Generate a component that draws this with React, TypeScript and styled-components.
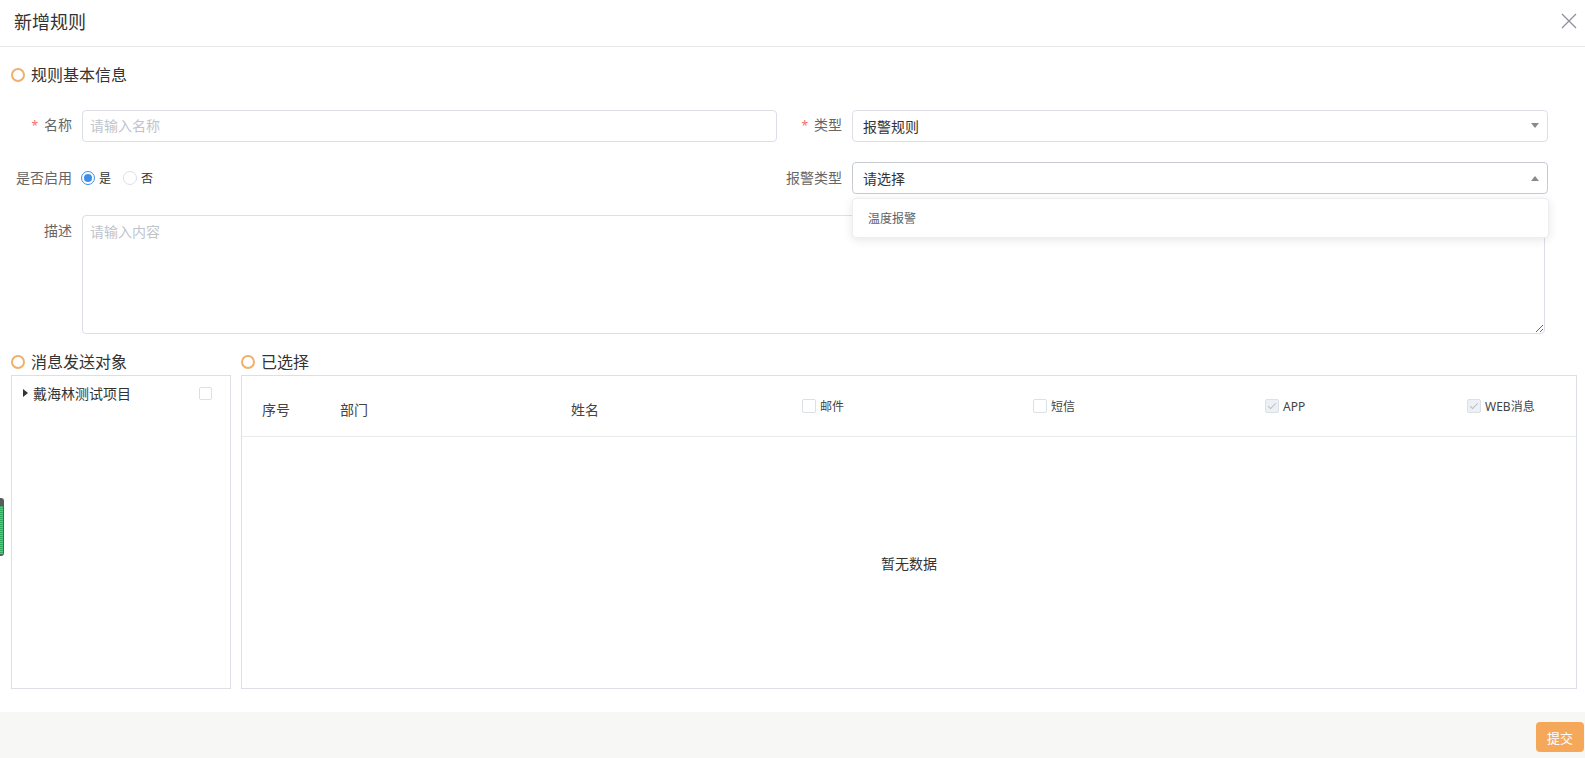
import React from "react";
import styled, { createGlobalStyle, css } from "styled-components";

const GlobalStyle = createGlobalStyle`
  html, body { margin: 0; padding: 0; background: #fff; overflow: hidden; }
  body { font-family: "Noto Sans", "Noto Sans CJK SC", sans-serif; color: #333; }
  * { box-sizing: border-box; }
`;

const Page = styled.div`
  position: relative;
  width: 1585px;
  height: 758px;
  display: flex;
  flex-direction: column;
  background: #fff;
`;

const Header = styled.div`
  height: 47px;
  flex: none;
  display: flex;
  justify-content: space-between;
  align-items: flex-start;
  border-bottom: 1px solid #e6e6e6;
  padding: 0 8px 0 14px;
`;

const Title = styled.div`
  font-size: 18px;
  line-height: 44px;
  color: #333;
`;

const CloseBtn = styled.button`
  margin-top: 13px;
  width: 16px;
  height: 16px;
  padding: 0;
  border: none;
  background: none;
  display: flex;
  cursor: pointer;
`;

const Main = styled.div`
  flex: 1;
  display: flex;
  flex-direction: column;
  padding-top: 17px;
`;

const SectionTitle = styled.div<{ $indent?: number }>`
  display: flex;
  align-items: center;
  gap: 6px;
  height: 22px;
  padding-left: ${(p) => p.$indent ?? 0}px;
  font-size: 16px;
  line-height: 22px;
  color: #333;
  &::before {
    content: "";
    width: 10px;
    height: 10px;
    border-radius: 50%;
    border: 2px solid #f0b06c;
    flex: none;
  }
`;

const FormRow = styled.div<{ $top: number; $right: number }>`
  display: flex;
  margin-top: ${(p) => p.$top}px;
  padding-right: ${(p) => p.$right}px;
`;

const FormItem = styled.div<{ $width?: number; $top?: boolean }>`
  display: flex;
  align-items: ${(p) => (p.$top ? "flex-start" : "center")};
  ${(p) =>
    p.$width
      ? css`
          width: ${p.$width}px;
          flex: none;
        `
      : css`
          flex: 1;
        `}
  min-width: 0;
`;

const Label = styled.label<{ $width: number }>`
  width: ${(p) => p.$width}px;
  flex: none;
  padding-right: 10px;
  text-align: right;
  font-size: 14px;
  line-height: 32px;
  color: #666;
  white-space: nowrap;
`;

const Star = styled.span`
  color: #f56c6c;
  font-size: 12px;
  margin-right: 6px;
`;

const TextInput = styled.input`
  flex: 1;
  height: 32px;
  border: 1px solid #dcdfe6;
  border-radius: 4px;
  padding: 0 7px;
  font-family: inherit;
  font-size: 14px;
  color: #333;
  outline: none;
  &::placeholder { color: #c0c4cc; }
`;

const SelectBox = styled.div<{ $open?: boolean }>`
  position: relative;
  flex: 1;
  height: 32px;
  border: 1px solid ${(p) => (p.$open ? "#c8cbd1" : "#dcdfe6")};
  border-radius: 4px;
  padding: 0 8px 0 10px;
  display: flex;
  align-items: center;
  justify-content: space-between;
  font-size: 14px;
  color: #333;
`;

const Arrow = styled.span<{ $up?: boolean }>`
  width: 0;
  height: 0;
  border-left: 4px solid transparent;
  border-right: 4px solid transparent;
  ${(p) =>
    p.$up
      ? css`border-bottom: 5px solid #8a8a8a;`
      : css`border-top: 5px solid #8a8a8a;`}
`;

const Dropdown = styled.div`
  position: absolute;
  z-index: 10;
  top: calc(100% + 5px);
  left: -1px;
  right: -2px;
  height: 40px;
  background: #fff;
  border: 1px solid #eceef2;
  border-radius: 4px;
  box-shadow: 0 2px 10px rgba(0, 0, 0, 0.1);
  display: flex;
  align-items: center;
  padding-left: 15px;
`;

const Option = styled.div`
  font-size: 12px;
  color: #606266;
`;

const RadioGroup = styled.div`
  display: flex;
  align-items: center;
  gap: 12px;
  margin-left: -1px;
`;

const RadioItem = styled.label`
  display: flex;
  align-items: center;
  gap: 4px;
  font-size: 12px;
  color: #333;
`;

const RadioDot = styled.span<{ $checked?: boolean }>`
  position: relative;
  width: 14px;
  height: 14px;
  border-radius: 50%;
  border: ${(p) => (p.$checked ? "1.5px solid #3d8ee6" : "1px solid #dcdfe6")};
  background: #fff;
  ${(p) =>
    p.$checked &&
    css`
      &::after {
        content: "";
        position: absolute;
        left: 50%;
        top: 50%;
        width: 8px;
        height: 8px;
        margin: -4px 0 0 -4px;
        border-radius: 50%;
        background: #3d8ee6;
      }
    `}
`;

const TextArea = styled.textarea`
  flex: 1;
  height: 119px;
  border: 1px solid #dcdfe6;
  border-radius: 4px;
  padding: 6px 7px;
  font-family: inherit;
  font-size: 14px;
  line-height: 20px;
  color: #333;
  outline: none;
  resize: vertical;
  &::placeholder { color: #c0c4cc; }
`;

const Bottom = styled.div`
  display: flex;
  gap: 10px;
  margin-top: 17px;
  padding: 0 8px 0 11px;
`;

const Column = styled.div<{ $width?: number }>`
  display: flex;
  flex-direction: column;
  gap: 2px;
  ${(p) => (p.$width ? css`width: ${p.$width}px; flex: none;` : css`flex: 1;`)}
`;

const Panel = styled.div`
  height: 314px;
  border: 1px solid #dcdfe6;
  display: flex;
  flex-direction: column;
`;

const TreeRow = styled.div`
  display: flex;
  align-items: center;
  height: 26px;
  margin-top: 4px;
  padding: 0 18px 0 11px;
  font-size: 14px;
  color: #333;
`;

const Caret = styled.span`
  width: 0;
  height: 0;
  border-top: 4px solid transparent;
  border-bottom: 4px solid transparent;
  border-left: 5px solid #333;
  margin-right: 5px;
`;

const TreeText = styled.span`
  flex: 1;
`;

const Check = styled.span<{ $checked?: boolean; $disabled?: boolean; $size?: number }>`
  position: relative;
  display: inline-block;
  flex: none;
  width: ${(p) => p.$size ?? 14}px;
  height: ${(p) => p.$size ?? 14}px;
  border: 1px solid #dcdfe6;
  border-radius: 2px;
  background: ${(p) => (p.$disabled ? "#edf0f5" : "#fff")};
  ${(p) =>
    p.$checked &&
    css`
      &::after {
        content: "";
        position: absolute;
        left: 4px;
        top: 1px;
        width: 3px;
        height: 7px;
        border: 1px solid #b9bdc4;
        border-left: 0;
        border-top: 0;
        transform: rotate(45deg);
      }
    `}
`;

const TableHead = styled.div`
  height: 61px;
  flex: none;
  display: grid;
  grid-template-columns: 78px 231px 231px 231px 232px 202px 1fr;
  border-bottom: 1px solid #e8eaee;
`;

const HeadCell = styled.div<{ $raise?: boolean }>`
  display: flex;
  align-items: center;
  gap: 4px;
  padding-left: 20px;
  padding-top: ${(p) => (p.$raise ? 0 : 5)}px;
  font-size: ${(p) => (p.$raise ? 12 : 14)}px;
  color: #444;
  white-space: nowrap;
`;

const Empty = styled.div`
  flex: 1;
  display: flex;
  align-items: center;
  justify-content: center;
  font-size: 14px;
  color: #333;
`;

const Footer = styled.div`
  height: 46px;
  flex: none;
  background: #f7f7f6;
  display: flex;
  justify-content: flex-end;
  align-items: flex-start;
  padding: 10px 1px 0 0;
`;

const SubmitBtn = styled.button`
  width: 48px;
  height: 30px;
  border: none;
  border-radius: 4px;
  background: #f6a85a;
  color: #fff;
  font-family: inherit;
  font-size: 13px;
  cursor: pointer;
  padding: 0;
`;

const SideTab = styled.div`
  position: absolute;
  left: 0;
  top: 498px;
  width: 4px;
  height: 58px;
  border-radius: 0 3px 3px 0;
  background: #5b5b5b;
  &::after {
    content: "";
    position: absolute;
    left: 0;
    right: 1px;
    top: 8px;
    bottom: 2px;
    background: repeating-linear-gradient(
      to bottom,
      #2faa5e 0px,
      #2faa5e 1px,
      #5fc98a 1px,
      #5fc98a 2px
    );
  }
`;

const headers: { text: string; check?: boolean; checked?: boolean }[] = [
  { text: "序号" },
  { text: "部门" },
  { text: "姓名" },
  { text: "邮件", check: true },
  { text: "短信", check: true },
  { text: "APP", check: true, checked: true },
  { text: "WEB消息", check: true, checked: true },
];

export default function App() {
  return (
    <>
      <GlobalStyle />
      <Page>
        <Header>
          <Title>新增规则</Title>
          <CloseBtn aria-label="关闭">
            <svg width="16" height="16" viewBox="0 0 16 16">
              <path d="M1 1 L15 15 M15 1 L1 15" stroke="#8c9199" strokeWidth="1.3" fill="none" />
            </svg>
          </CloseBtn>
        </Header>
        <Main>
          <SectionTitle $indent={11}>规则基本信息</SectionTitle>

          <FormRow $top={23} $right={37}>
            <FormItem $width={777}>
              <Label $width={82}>
                <Star>*</Star>名称
              </Label>
              <TextInput placeholder="请输入名称" />
            </FormItem>
            <FormItem>
              <Label $width={75}>
                <Star>*</Star>类型
              </Label>
              <SelectBox>
                <span>报警规则</span>
                <Arrow />
              </SelectBox>
            </FormItem>
          </FormRow>

          <FormRow $top={20} $right={37}>
            <FormItem $width={777}>
              <Label $width={82}>是否启用</Label>
              <RadioGroup>
                <RadioItem>
                  <RadioDot $checked />是
                </RadioItem>
                <RadioItem>
                  <RadioDot />否
                </RadioItem>
              </RadioGroup>
            </FormItem>
            <FormItem>
              <Label $width={75}>报警类型</Label>
              <SelectBox $open>
                <span>请选择</span>
                <Arrow $up />
                <Dropdown>
                  <Option>温度报警</Option>
                </Dropdown>
              </SelectBox>
            </FormItem>
          </FormRow>

          <FormRow $top={21} $right={40}>
            <FormItem $top>
              <Label $width={82}>描述</Label>
              <TextArea placeholder="请输入内容" />
            </FormItem>
          </FormRow>

          <Bottom>
            <Column $width={220}>
              <SectionTitle>消息发送对象</SectionTitle>
              <Panel>
                <TreeRow>
                  <Caret />
                  <TreeText>戴海林测试项目</TreeText>
                  <Check $size={13} />
                </TreeRow>
              </Panel>
            </Column>
            <Column>
              <SectionTitle>已选择</SectionTitle>
              <Panel>
                <TableHead>
                  {headers.map((h) => (
                    <HeadCell key={h.text} $raise={h.check}>
                      {h.check && <Check $checked={h.checked} $disabled={h.checked} />}
                      {h.text}
                    </HeadCell>
                  ))}
                </TableHead>
                <Empty>暂无数据</Empty>
              </Panel>
            </Column>
          </Bottom>
        </Main>
        <Footer>
          <SubmitBtn>提交</SubmitBtn>
        </Footer>
        <SideTab />
      </Page>
    </>
  );
}
